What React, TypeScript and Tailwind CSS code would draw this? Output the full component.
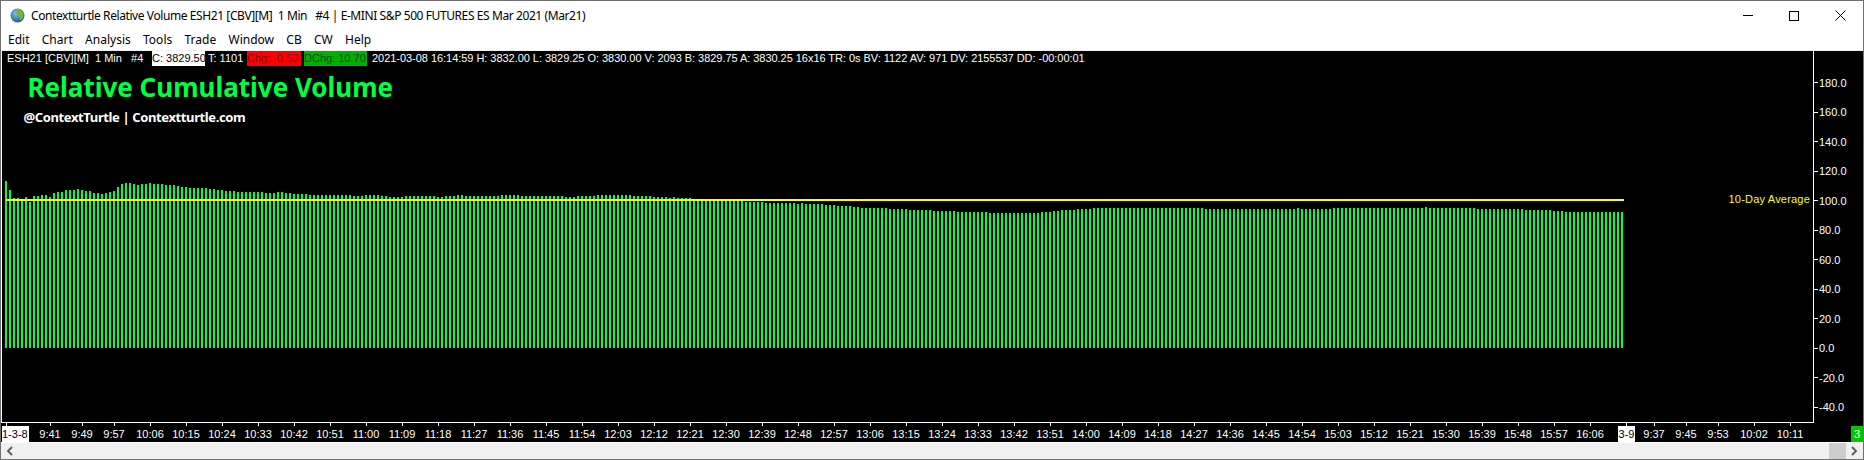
import React from 'react';

const MENU = ['Edit', 'Chart', 'Analysis', 'Tools', 'Trade', 'Window', 'CB', 'CW', 'Help'];
const Y_TICKS = ['180.0', '160.0', '140.0', '120.0', '100.0', '80.0', '60.0', '40.0', '20.0', '0.0', '-20.0', '-40.0'];

const FIRST_TOPS = [
  181, 190, 198, 198, 199, 197, 202, 196, 196, 195, 195, 197, 193, 192, 192, 190, 190, 190, 189, 190, 191, 191, 193, 193, 194,
  193, 192, 191, 187, 184, 183, 183, 184, 185, 184, 184, 183, 184, 184, 184, 185, 185, 185, 186, 187, 187, 188, 188, 188,
];

// [last bar x, top y] for everything after the first 49 bars
const TOP_RUNS: [number, number][] = [
  [205, 188], [213, 189], [221, 190], [233, 191], [261, 192], [273, 193], [281, 192], [289, 193], [305, 194], [349, 195],
  [361, 196], [377, 195], [385, 196], [401, 197], [433, 196], [441, 197], [453, 196], [461, 195], [497, 196], [517, 195],
  [561, 196], [573, 197], [593, 196], [629, 195], [649, 196], [665, 197], [669, 198], [673, 197], [689, 198], [741, 199],
  [761, 202], [793, 203], [797, 204], [801, 203], [821, 204], [833, 205], [849, 206], [857, 207], [885, 208], [905, 209],
  [929, 210], [953, 211], [985, 212], [1037, 213], [1049, 212], [1057, 211], [1073, 210], [1089, 209], [1201, 208],
  [1293, 209], [1297, 208], [1329, 209], [1421, 208], [1425, 207], [1473, 208], [1521, 209], [1549, 210], [1561, 211], [1621, 212],
];

function barTop(i: number) {
  if (i < FIRST_TOPS.length) return FIRST_TOPS[i];
  const x = 5 + i * 4;
  const run = TOP_RUNS.find((r) => x <= r[0]);
  return run ? run[1] : 212;
}

const BARS = Array.from({ length: 405 }, (_, i) => ({ x: 5 + i * 4, top: barTop(i) }));

const DAY_TIMES = Array.from({ length: 41 }, (_, i) => {
  const mins = 10 * 60 + 6 + i * 9;
  return `${Math.floor(mins / 60)}:${String(mins % 60).padStart(2, '0')}`;
});

function Globe() {
  return (
    <svg width="15" height="15" viewBox="0 0 14 14" className="shrink-0">
      <defs>
        <radialGradient id="sea" cx="40%" cy="35%" r="70%">
          <stop offset="0%" stopColor="#7fc4ee" />
          <stop offset="100%" stopColor="#14539c" />
        </radialGradient>
      </defs>
      <circle cx="7" cy="7" r="6.5" fill="url(#sea)" />
      <path d="M5 1.5 C8 0.5 12 2.5 12.6 6 C12.8 9 11 11 9.5 11.5 C8.5 9.5 9.5 8 7.5 7 C5.5 6.5 5 4.5 6.5 4 C6 3 5 2.5 5 1.5 Z" fill="#79b531" />
      <path d="M1 6.5 C2.5 7 4 8.5 4 11 C2.5 10.5 1.2 8.5 1 6.5 Z" fill="#5f9e33" />
    </svg>
  );
}

function TimeLabel({ label, wide }: { label: string; wide?: boolean }) {
  return (
    <div className={`flex flex-col items-center shrink-0 ${wide ? 'w-[36px]' : 'w-[32px]'}`}>
      <div className="w-px h-[3px] bg-white" />
      <div className="h-[16px] leading-[16px] whitespace-nowrap">{label}</div>
    </div>
  );
}

export default function App() {
  return (
    <div className="w-[1864px] h-[460px] border border-[#707070] bg-white flex flex-col overflow-hidden font-['Liberation_Sans',sans-serif]">
      {/* title bar */}
      <div className="h-[29px] shrink-0 flex items-center pl-[9px] text-black">
        <Globe />
        <div className="ml-[6px] text-[12px] tracking-[-0.41px] whitespace-pre font-['Noto_Sans',sans-serif]">
          Contextturtle Relative Volume ESH21 [CBV][M]  1 Min   #4 | E-MINI S&amp;P 500 FUTURES ES Mar 2021 (Mar21)
        </div>
        <div className="ml-auto flex items-center">
          <div className="w-[46px] flex justify-center">
            <div className="w-[10px] h-px bg-black" />
          </div>
          <div className="w-[46px] flex justify-center">
            <div className="w-[10px] h-[10px] border border-black" />
          </div>
          <div className="w-[46px] flex justify-center">
            <svg width="11" height="11" viewBox="0 0 11 11" stroke="black" fill="none">
              <path d="M0.5 0.5 L10.5 10.5 M10.5 0.5 L0.5 10.5" />
            </svg>
          </div>
        </div>
      </div>

      {/* menu */}
      <div className="h-[20px] shrink-0 flex items-center pl-[7px] gap-[12.3px] text-[12px] text-black font-['Noto_Sans',sans-serif]">
        {MENU.map((m) => (
          <span key={m}>{m}</span>
        ))}
      </div>
      <div className="h-px shrink-0 bg-[#f0f0f0]" />

      {/* chart + price axis */}
      <div className="h-[372px] shrink-0 flex bg-black text-white text-[11px]">
        <div className="relative w-[1813px] shrink-0 border-l border-r border-b border-white">
          <svg className="absolute inset-0" width="1811" height="371" viewBox="2 51 1811 371">
            {BARS.map((b) => (
              <rect key={b.x} x={b.x} y={b.top} width="2" height={348 - b.top} fill="#00ff40" />
            ))}
            <rect x="6" y="199" width="1618" height="2" fill="#ffff00" />
          </svg>
          <div className="relative flex h-[15px] items-center whitespace-pre leading-[15px]">
            <div className="pl-[5px] w-[150px] shrink-0">ESH21 [CBV][M]  1 Min   #4</div>
            <div className="w-[53px] shrink-0 bg-white text-black overflow-hidden">C: 3829.50</div>
            <div className="w-[42px] shrink-0 pl-[3px]">T: 1101</div>
            <div className="w-[54px] shrink-0 bg-[#ff0000] text-[#7a0000] overflow-hidden">Chg: -0.50</div>
            <div className="w-[3px] shrink-0" />
            <div className="w-[63px] shrink-0 bg-[#00b000] text-[#004a00] overflow-hidden">DChg: 10.70</div>
            <div className="pl-[5px] tracking-[-0.04px]">2021-03-08 16:14:59 H: 3832.00 L: 3829.25 O: 3830.00 V: 2093 B: 3829.75 A: 3830.25 16x16 TR: 0s BV: 1122 AV: 971 DV: 2155537 DD: -00:00:01</div>
          </div>
          <div className="relative pl-[25.5px] mt-[7px] text-[26px] leading-[28px] font-bold text-[#00ff40] font-['Noto_Sans',sans-serif]">
            Relative Cumulative Volume
          </div>
          <div className="relative pl-[21.5px] mt-[7px] text-[13px] tracking-[-0.38px] leading-[18px] font-bold text-white font-['Noto_Sans',sans-serif]">
            @ContextTurtle | Contextturtle.com
          </div>
          <div className="absolute right-[3px] top-[141px] leading-[15px] tracking-[0.2px] text-[#ffff00]">10-Day Average</div>
        </div>
        <div className="flex-1 pt-[17px]">
          {Y_TICKS.map((t) => (
            <div key={t} className="h-[29.5px] flex items-center">
              <div className="w-[4px] h-px bg-white" />
              <div className="ml-[1px]">{t}</div>
            </div>
          ))}
        </div>
      </div>

      {/* time axis */}
      <div className="h-[19px] shrink-0 flex bg-black text-white text-[11px]">
        <div className="w-[27px] ml-[1px] flex flex-col shrink-0">
          <div className="h-[3px] pl-[4px]">
            <div className="w-px h-[3px] bg-white" />
          </div>
          <div className="h-[16px] leading-[16px] bg-white text-black overflow-hidden whitespace-nowrap">1-3-8</div>
        </div>
        <div className="w-[5px] shrink-0" />
        <TimeLabel label="9:41" />
        <TimeLabel label="9:49" />
        <TimeLabel label="9:57" />
        <div className="w-[2px] shrink-0" />
        {DAY_TIMES.map((t) => (
          <TimeLabel key={t} label={t} wide />
        ))}
        <div className="w-[10px] shrink-0" />
        <div className="w-[17px] flex flex-col items-center shrink-0">
          <div className="w-px h-[3px] bg-white" />
          <div className="w-full h-[16px] leading-[16px] bg-white text-black overflow-hidden whitespace-nowrap text-center">3-9</div>
        </div>
        <div className="w-[3px] shrink-0" />
        <TimeLabel label="9:37" />
        <TimeLabel label="9:45" />
        <TimeLabel label="9:53" />
        <div className="w-[2px] shrink-0" />
        <TimeLabel label="10:02" wide />
        <TimeLabel label="10:11" wide />
        <div className="ml-auto mt-[3px] w-[12px] h-[16px] leading-[16px] bg-[#00c800] text-center">3</div>
      </div>

      {/* scrollbar */}
      <div className="h-[17px] shrink-0 bg-[#f0f0f0] border-t border-white flex items-center">
        <svg width="17" height="16" viewBox="0 0 17 16" fill="none" stroke="#606060" strokeWidth="2" className="shrink-0">
          <path d="M11 4 L7 8 L11 12" />
        </svg>
        <div className="ml-auto w-[17px] h-[16px] bg-[#cdcdcd]" />
        <svg width="17" height="16" viewBox="0 0 17 16" fill="none" stroke="#606060" strokeWidth="2" className="shrink-0">
          <path d="M6 4 L10 8 L6 12" />
        </svg>
      </div>
    </div>
  );
}
